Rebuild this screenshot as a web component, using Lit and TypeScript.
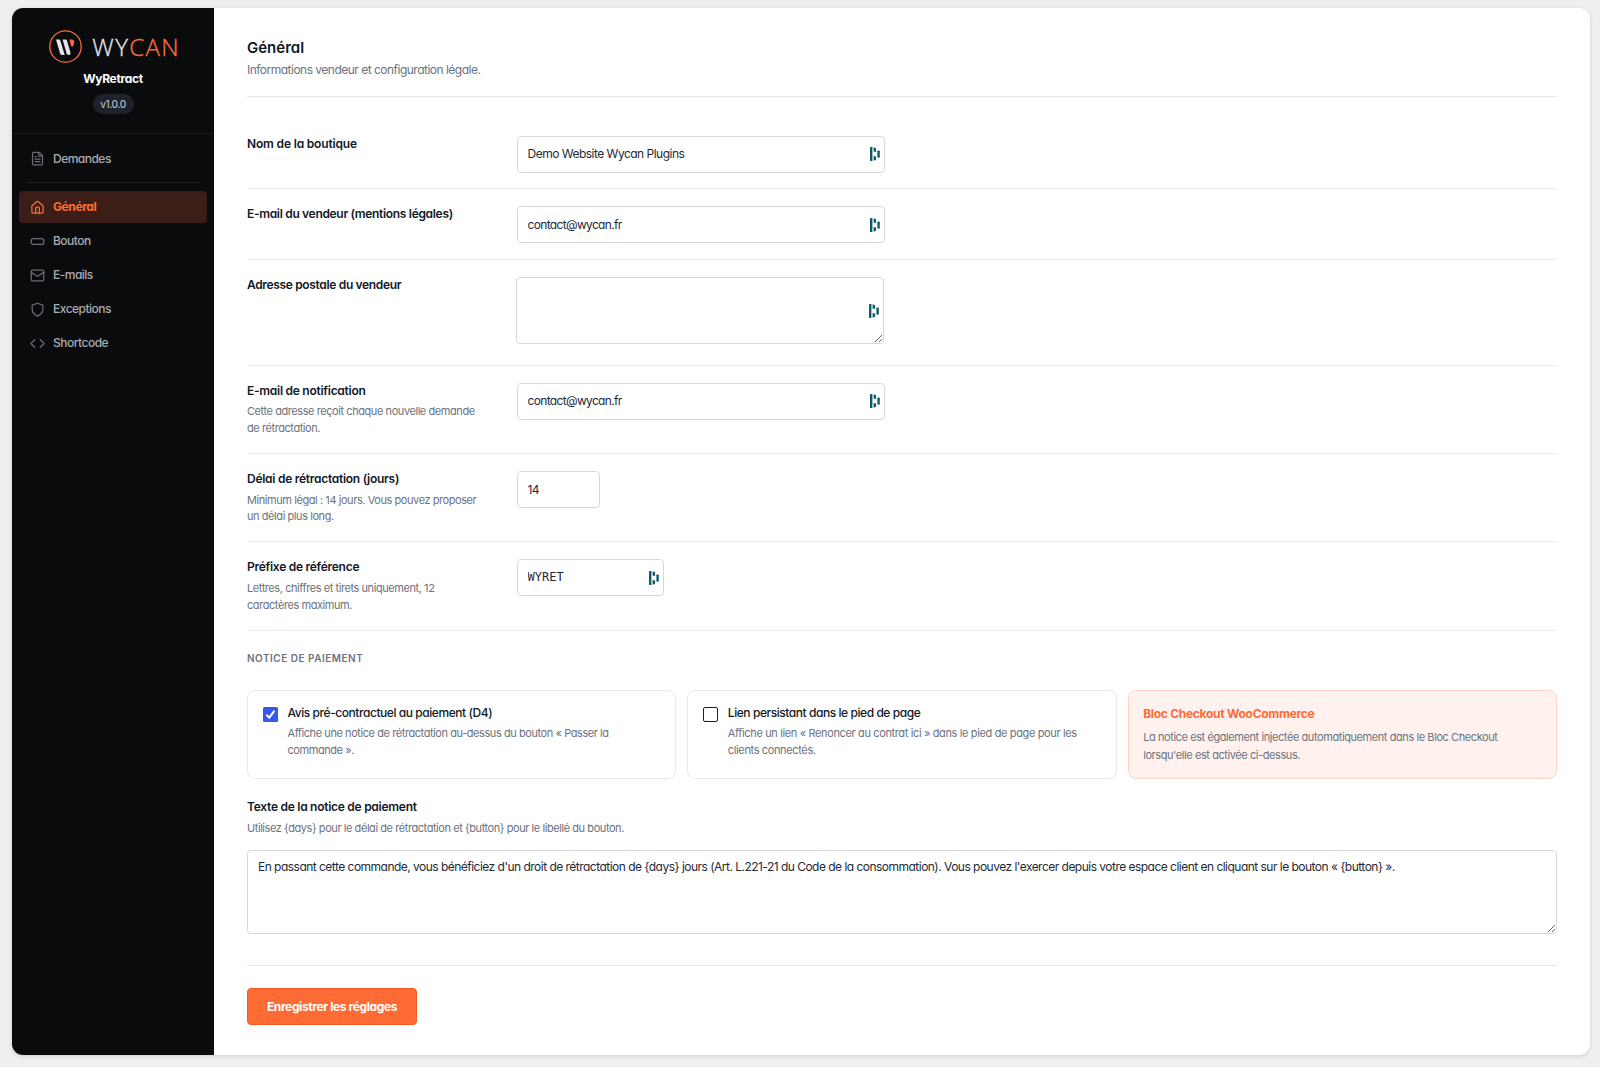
import { LitElement, html, svg, css, nothing, TemplateResult } from "lit";
import { customElement, property } from "lit/decorators.js";
import { classMap } from "lit/directives/class-map.js";

const glyphs: Record<string, TemplateResult> = {
  file: svg`<path d="M14.5 2H6a2 2 0 0 0-2 2v16a2 2 0 0 0 2 2h12a2 2 0 0 0 2-2V7.5z"/><path d="M14 2v6h6M16 13H8M16 17H8M10 9H8"/>`,
  home: svg`<path d="M3 10.2a2 2 0 0 1 .7-1.5l7-6a2 2 0 0 1 2.6 0l7 6a2 2 0 0 1 .7 1.5V19a2 2 0 0 1-2 2H5a2 2 0 0 1-2-2z"/><path d="M9 21v-8a1.5 1.5 0 0 1 1.5-1.5h3A1.5 1.5 0 0 1 15 13v8"/>`,
  button: svg`<rect x="2" y="7.5" width="20" height="9" rx="3.5"/>`,
  mail: svg`<rect x="2" y="3.5" width="20" height="17" rx="2"/><path d="m22 7-8.97 5.7a1.94 1.94 0 0 1-2.06 0L2 7"/>`,
  shield: svg`<path d="M12 22.5s8.5-4 8.5-10.500V5L12 2 3.500 5v7c0 6.500 8.500 10.500 8.500 10.500z"/>`,
  code: svg`<path d="m16.500 18 6-6-6-6M7.500 6l-6 6 6 6"/>`,
};

@customElement("nav-icon")
export class NavIcon extends LitElement {
  @property() name = "file";
  static styles = css`
    :host { display: block; width: 15px; height: 15px; flex: none; }
    .icon { display: block; width: 15px; height: 15px; fill: none; stroke: currentColor; stroke-width: 2; stroke-linecap: round; stroke-linejoin: round; }
  `;
  render() {
    return html`<svg class="icon" viewBox="0 0 24 24">${glyphs[this.name]}</svg>`;
  }
}

type Field = {
  label: string;
  help?: string;
  value: string;
  size: "wide" | "number" | "prefix" | "area";
  badge: boolean;
  kind?: string;
};

const fields: Field[] = [
  { label: "Nom de la boutique", value: "Demo Website Wycan Plugins", size: "wide", badge: true, kind: "loose" },
  { label: "E-mail du vendeur (mentions légales)", value: "contact@wycan.fr", size: "wide", badge: true, kind: "medium" },
  { label: "Adresse postale du vendeur", value: "", size: "area", badge: true, kind: "tight" },
  { label: "E-mail de notification", help: "Cette adresse reçoit chaque nouvelle demande de rétractation.", value: "contact@wycan.fr", size: "wide", badge: true },
  { label: "Délai de rétractation (jours)", help: "Minimum légal : 14 jours. Vous pouvez proposer un délai plus long.", value: "14", size: "number", badge: false },
  { label: "Préfixe de référence", help: "Lettres, chiffres et tirets uniquement, 12 caractères maximum.", value: "WYRET", size: "prefix", badge: true },
];

const nav = [
  { icon: "home", label: "Général", active: true },
  { icon: "button", label: "Bouton", active: false },
  { icon: "mail", label: "E-mails", active: false },
  { icon: "shield", label: "Exceptions", active: false },
  { icon: "code", label: "Shortcode", active: false },
];

@customElement("app-root")
export class AppRoot extends LitElement {
  static styles = css`
    :host {
      display: block;
      box-sizing: border-box;
      height: 1067px;
      padding: 8px 10px 12px 12px;
      background: #efeff0;
      color: #111827;
      font-family: Inter, "Liberation Sans", sans-serif;
      font-size: 12px;
      line-height: 18px;
      font-feature-settings: "cv11";
    }
    * { box-sizing: border-box; }
    .panel { display: flex; height: 1047px; border-radius: 11px; overflow: hidden; background: #fff; box-shadow: 0 1px 4px rgba(0, 0, 0, 0.14); }

    .sidebar { width: 202px; flex: none; background: #0a0b0d; color: #a9acb3; }
    .head { display: flex; flex-direction: column; align-items: center; height: 126px; padding-top: 22px; border-bottom: 1px solid #161c24; }
    .brand { display: flex; align-items: center; gap: 10px; height: 33px; padding-left: 2px; }
    .mark { width: 33px; height: 33px; display: block; }
    .word { font-family: "Open Sans", sans-serif; font-weight: 300; font-size: 24px; line-height: 33px; letter-spacing: 1.400px; margin-right: -1.400px; color: #e4e5e8; -webkit-text-stroke: 0.3px currentColor; }
    .accent { color: #ff6b35; }
    .product { margin-top: 7px; color: #fff; font-weight: 700; letter-spacing: -0.32px; }
    .version { margin-top: 6px; height: 20px; width: 41px; border-radius: 10px; background: #1f222b; color: #b4b7bf; text-align: center; font-size: 10px; line-height: 20px; font-weight: 500; letter-spacing: -0.45px; }
    .nav { display: flex; flex-direction: column; gap: 2px; padding: 8.500px 7px 0; }
    .item { display: flex; align-items: center; gap: 8.500px; height: 32px; padding-left: 10.500px; border-radius: 4px; font-weight: 500; letter-spacing: -0.51px; }
    .item nav-icon { color: #676c77; }
    .item.active { background: #3a1e17; color: #ff6b35; font-weight: 700; letter-spacing: -0.41px; }
    .item.active nav-icon { color: #ff6b35; }
    .split { height: 1px; margin: 5.500px 7px 6px 8px; background: #1d2026; }

    .main { flex: 1; min-width: 0; padding: 30.200px 33px 0; }
    .title { margin: 0; font-size: 15px; line-height: 20px; font-weight: 600; letter-spacing: 0; }
    .subtitle { margin: 2.400px 0 0; color: #6b7280; letter-spacing: -0.51px; }
    .header { height: 59px; border-bottom: 1px solid #e8e9eb; margin-bottom: 21.500px; }
    .row { display: grid; grid-template-columns: 240px 1fr; column-gap: 30px; height: 70.800px; padding-top: 16px; border-bottom: 1px solid #ebecee; }
    .row.helped { height: 88.300px; }
    .row.area { height: 105.500px; }
    .label { font-weight: 600; letter-spacing: -0.27px; white-space: nowrap; }
    .label.tight { letter-spacing: -0.34px; }
    .label.medium { letter-spacing: -0.32px; }
    .label.loose { letter-spacing: -0.17px; }
    .help { margin-top: 3.600px; font-size: 11px; line-height: 16.600px; letter-spacing: -0.43px; color: #6b7280; }
    .control { position: relative; margin-top: 1px; height: 37px; }
    .control.wide { width: 368px; }
    .control.area { width: 368px; height: 67px; margin-left: -1px; }
    .control.number { width: 82.500px; }
    .control.prefix { width: 147px; }
    .input { display: block; width: 100%; height: 100%; margin: 0; padding: 0 9.500px 1px; border: 1px solid #d5d8dd; border-radius: 4px; background: #fff; color: #1f2937; outline: none; font: inherit; font-feature-settings: inherit; letter-spacing: -0.51px; }
    .mail { letter-spacing: -0.66px; }
    .mono { font-family: "DejaVu Sans Mono", monospace; font-size: 12px; letter-spacing: 0; }
    .badge { position: absolute; right: 5px; top: 50%; width: 10px; height: 14px; margin-top: -7px; fill: #0e5a6b; }

    .section { margin: 19px 0 23.900px; font-size: 10px; line-height: 16px; font-weight: 600; letter-spacing: 0.5px; color: #6b7280; }
    .cards { display: grid; grid-template-columns: repeat(3, 1fr); gap: 11px; height: 89px; }
    .card { display: flex; gap: 9.500px; padding: 13.500px 15px 0; border: 1px solid #e8e9eb; border-radius: 8px; }
    .check { width: 15px; height: 15px; flex: none; margin-top: 2.500px; display: block; }
    .name { font-weight: 500; letter-spacing: -0.44px; white-space: nowrap; }
    .text { margin-top: 3px; font-size: 11px; line-height: 16.700px; letter-spacing: -0.43px; color: #6b7280; }
    .text.footer { letter-spacing: -0.365px; }
    .card.note { display: block; padding-top: 14.500px; padding-left: 14.500px; border-color: #ffd3c2; background: #fff2ee; }
    .note .name { color: #ff6b35; font-weight: 700; letter-spacing: -0.285px; }
    .note .text { margin-top: 6.400px; line-height: 17.300px; letter-spacing: -0.42px; }

    .notice { margin-top: 19.300px; }
    .notice .help { margin-top: 4px; letter-spacing: -0.435px; }
    .message { height: 84px; margin-top: 13.800px; padding: 7px 10px; resize: vertical; line-height: 18px; letter-spacing: -0.522px; }
    .actions { margin-top: 31.200px; padding-top: 22px; border-top: 1px solid #e8e9eb; }
    .save { display: block; width: 170px; height: 37px; padding: 1px 0 0; border: 1px solid #f4581f; border-radius: 4px; background: #ff6b35; color: #fff; font: inherit; font-feature-settings: inherit; font-weight: 700; letter-spacing: -0.39px; }
  `;

  private badge() {
    return html`<svg class="badge" viewBox="0 0 10 14">
      <rect x="0" y="0" width="2.400" height="14" rx=".4"/>
      <path d="M3.600 .3 6.100 1.200v3.900l-2.500-.7zM3.600 8.900l2.500.6v3.300l-2.500.9z"/>
      <rect x="7.400" y="3.500" width="2.400" height="7.200" rx=".8"/>
    </svg>`;
  }

  private control(f: Field) {
    if (f.size === "area") return html`<textarea class="input"></textarea>`;
    return html`<input class=${classMap({ input: true, mono: f.size === "prefix", mail: f.value.includes("@") })} .value=${f.value} />`;
  }

  private row(f: Field) {
    return html`<div class=${classMap({ row: true, helped: !!f.help, area: f.size === "area" })}>
      <div>
        <div class="label ${f.kind ?? ""}">${f.label}</div>
        ${f.help ? html`<div class="help">${f.help}</div>` : nothing}
      </div>
      <div class="control ${f.size}">${this.control(f)}${f.badge ? this.badge() : nothing}</div>
    </div>`;
  }

  render() {
    return html`<div class="panel">
      <aside class="sidebar">
        <div class="head">
          <div class="brand">
            <svg class="mark" viewBox="0 0 33 33">
              <circle cx="16.500" cy="16.500" r="15.700" fill="none" stroke="#ff6b35" stroke-width="1.300"/>
              <path d="M7 9.500h2.600c1 0 1.500.4 1.800 1.300L15.700 25h-2.600c-1 0-1.700-.5-2-1.400z" fill="#e4e5e8"/>
              <path d="M13.600 9.500h2.600c1 0 1.500.4 1.800 1.300l3.300 11.100c.5 1.800 0 3.100-1.800 3.100-1 0-1.600-.5-1.900-1.400z" fill="#e4e5e8"/>
              <path d="M20.400 9.500h2.300c1.800 0 2.700 1.200 2.500 2.800l-.6 2.600c-.3 1.300-1 1.900-2.300 1.500z" fill="#ff6b35"/>
            </svg>
            <div class="word">WY<span class="accent">CAN</span></div>
          </div>
          <div class="product">WyRetract</div>
          <div class="version">v1.0.0</div>
        </div>
        <nav class="nav">
          <div class="item"><nav-icon name="file"></nav-icon>Demandes</div>
          <div class="split"></div>
          ${nav.map((n) => html`<div class=${classMap({ item: true, active: n.active })}><nav-icon name=${n.icon}></nav-icon>${n.label}</div>`)}
        </nav>
      </aside>
      <main class="main">
        <header class="header">
          <h1 class="title">Général</h1>
          <p class="subtitle">Informations vendeur et configuration légale.</p>
        </header>
        ${fields.map((f) => this.row(f))}
        <div class="section">NOTICE DE PAIEMENT</div>
        <div class="cards">
          <div class="card">
            <svg class="check" viewBox="0 0 15 15"><rect width="15" height="15" rx="1.500" fill="#3858e9"/><path d="m3.400 7.700 2.900 3 5.200-7" fill="none" stroke="#fff" stroke-width="2"/></svg>
            <div>
              <div class="name">Avis pré-contractuel au paiement (D4)</div>
              <div class="text">Affiche une notice de rétractation au-dessus du bouton « Passer la<br />commande ».</div>
            </div>
          </div>
          <div class="card">
            <svg class="check" viewBox="0 0 15 15"><rect x=".5" y=".5" width="14" height="14" rx="1.500" fill="#fff" stroke="#1e1e1e"/></svg>
            <div>
              <div class="name">Lien persistant dans le pied de page</div>
              <div class="text footer">Affiche un lien « Renoncer au contrat ici » dans le pied de page pour les<br />clients connectés.</div>
            </div>
          </div>
          <div class="card note">
            <div class="name">Bloc Checkout WooCommerce</div>
            <div class="text">La notice est également injectée automatiquement dans le Bloc Checkout<br />lorsqu'elle est activée ci-dessus.</div>
          </div>
        </div>
        <div class="notice">
          <div class="label">Texte de la notice de paiement</div>
          <div class="help">Utilisez {days} pour le délai de rétractation et {button} pour le libellé du bouton.</div>
          <textarea class="input message" .value=${"En passant cette commande, vous bénéficiez d'un droit de rétractation de {days} jours (Art. L.221-21 du Code de la consommation). Vous pouvez l'exercer depuis votre espace client en cliquant sur le bouton « {button} »."}></textarea>
        </div>
        <div class="actions"><button class="save">Enregistrer les réglages</button></div>
      </main>
    </div>`;
  }
}
